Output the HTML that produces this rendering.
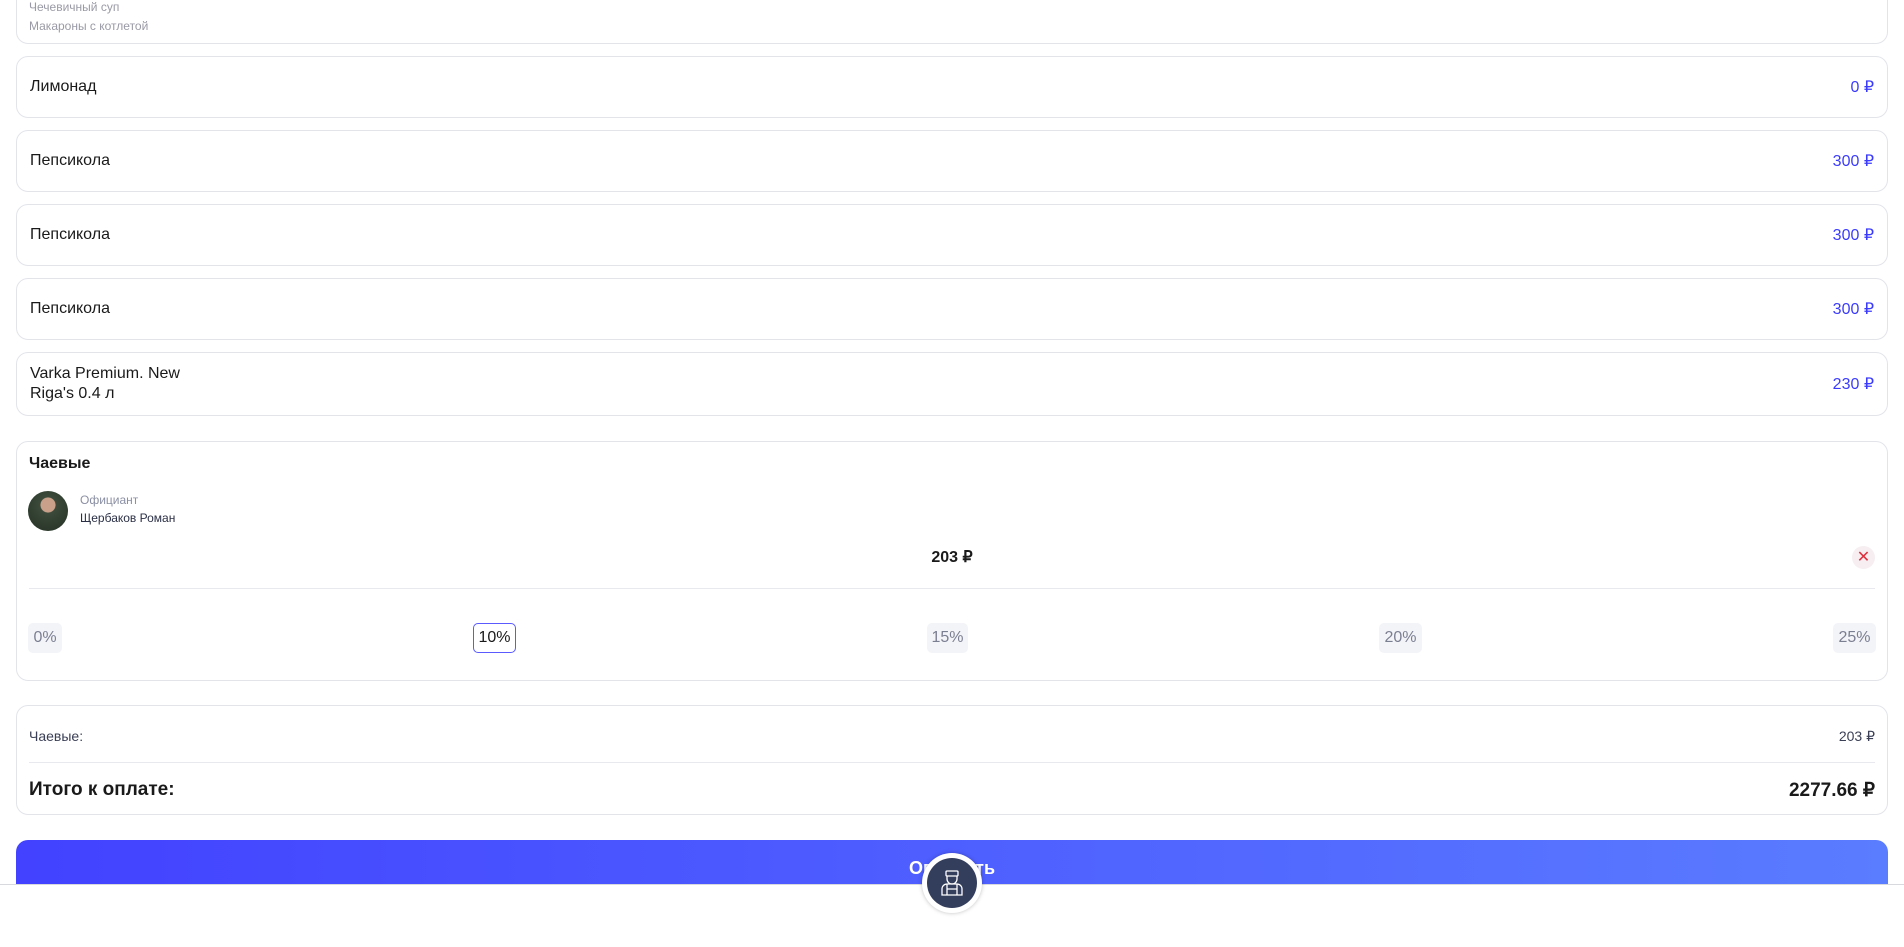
<!DOCTYPE html>
<html><head><meta charset="utf-8"><style>
*{box-sizing:border-box;margin:0;padding:0}
body{width:1904px;height:947px;overflow:hidden;background:#fff;font-family:"Liberation Sans",sans-serif;color:#1a1a1a;position:relative}
.card{position:absolute;left:16px;width:1872px;border:1px solid #e3e4ea;border-radius:12px;background:#fff}
.row{display:flex;justify-content:space-between;align-items:center;padding:0 13px;font-size:16px}
.price{color:#3b3bff}
.small{font-size:12px;color:#9a9aa6;position:absolute;left:29px}
.pct{position:absolute;top:623px;height:30px;border-radius:5px;background:#f3f4f7;color:#7b7f92;font-size:16px;line-height:30px;text-align:center}
</style></head><body>
<div class="card" style="top:-20px;height:64px"></div>
<div class="small" style="top:0px">Чечевичный суп</div>
<div class="small" style="top:19px">Макароны с котлетой</div>

<div class="card row" style="top:56px;height:62px"><span>Лимонад</span><span class="price">0 ₽</span></div>
<div class="card row" style="top:130px;height:62px"><span>Пепсикола</span><span class="price">300 ₽</span></div>
<div class="card row" style="top:204px;height:62px"><span>Пепсикола</span><span class="price">300 ₽</span></div>
<div class="card row" style="top:278px;height:62px"><span>Пепсикола</span><span class="price">300 ₽</span></div>
<div class="card row" style="top:352px;height:64px"><span style="line-height:20px">Varka Premium. New<br>Riga's 0.4 л</span><span class="price">230 ₽</span></div>

<div class="card" style="top:441px;height:240px"></div>
<div style="position:absolute;left:29px;top:455px;font-size:16px;font-weight:bold">Чаевые</div>
<div style="position:absolute;left:28px;top:491px;width:40px;height:40px;border-radius:50%;background:radial-gradient(circle at 50% 35%,#c9a08a 0 22%,#3b4a3a 24%,#243024 100%)"></div>
<div style="position:absolute;left:80px;top:493px;font-size:12px;color:#8a8fa3">Официант</div>
<div style="position:absolute;left:80px;top:511px;font-size:12px;color:#2a2f45">Щербаков Роман</div>
<div style="position:absolute;left:0;width:1904px;top:547px;text-align:center;font-size:16px;font-weight:bold">203 ₽</div>
<div style="position:absolute;left:1852px;top:546px;width:23px;height:23px;border-radius:50%;background:#f6eef1;color:#e0303d;font-size:16px;line-height:23px;text-align:center">✕</div>
<div style="position:absolute;left:29px;top:588px;width:1846px;height:1px;background:#e8e9ee"></div>
<div class="pct" style="left:28px;width:34px">0%</div>
<div class="pct" style="left:473px;width:43px;background:#fff;border:1px solid #5a5aff;color:#1a1a1a;line-height:28px">10%</div>
<div class="pct" style="left:927px;width:41px">15%</div>
<div class="pct" style="left:1379px;width:43px">20%</div>
<div class="pct" style="left:1833px;width:43px">25%</div>

<div class="card" style="top:705px;height:110px"></div>
<div style="position:absolute;left:29px;top:728px;font-size:14px;color:#3a3f55">Чаевые:</div>
<div style="position:absolute;right:29px;top:728px;font-size:14px;color:#3a3f55">203 ₽</div>
<div style="position:absolute;left:29px;top:762px;width:1846px;height:1px;background:#e8e9ee"></div>
<div style="position:absolute;left:29px;top:779px;font-size:19px;font-weight:bold">Итого к оплате:</div>
<div style="position:absolute;right:29px;top:779px;font-size:19px;font-weight:bold">2277.66 ₽</div>

<div style="position:absolute;left:16px;top:840px;width:1872px;height:60px;border-radius:12px;background:linear-gradient(90deg,#4242ff,#5a7cff);color:#fff;font-size:18px;font-weight:bold;text-align:center;padding-top:18px">Оплатить</div>
<div style="position:absolute;left:0;top:884px;width:1904px;height:63px;background:#fff;border-top:1px solid #d8d9de"></div>
<div style="position:absolute;left:922px;top:853px;width:60px;height:60px;border-radius:50%;background:#fff;box-shadow:0 0 4px rgba(0,0,0,.25)"></div>
<div style="position:absolute;left:927px;top:858px;width:50px;height:50px;border-radius:50%;background:#333d5c">
<svg width="50" height="50" viewBox="0 0 50 50" fill="none" stroke="#fff" stroke-width="1.3"><rect x="19" y="13" width="12" height="5" rx="1"/><path d="M20 18v3a5 5 0 0 0 10 0v-3"/><path d="M15 37v-6a5 5 0 0 1 5-5h10a5 5 0 0 1 5 5v6z"/><path d="M20 26v11M30 26v11M20 31h10"/></svg>
</div>
</body></html>
